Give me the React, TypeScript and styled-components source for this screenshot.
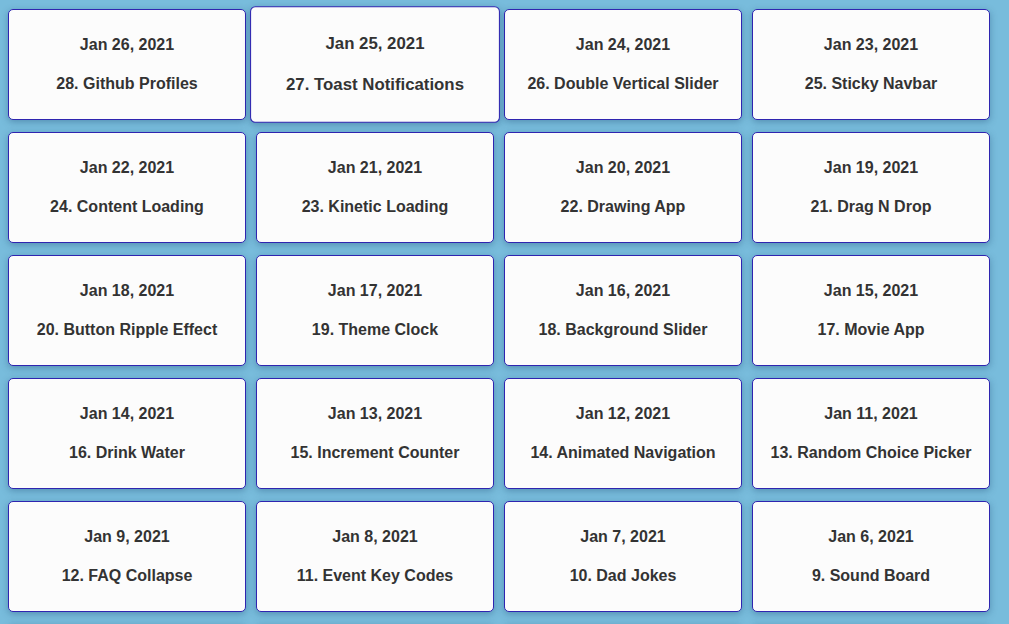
import React from "react";
import styled, { createGlobalStyle } from "styled-components";

const Global = createGlobalStyle`
  html, body {
    margin: 0;
    padding: 0;
    background: #78bcdc;
    font-family: "Liberation Sans", Arial, sans-serif;
  }
`;

const Grid = styled.div`
  display: grid;
  grid-template-columns: repeat(4, 238px);
  column-gap: 10px;
  row-gap: 12px;
  padding: 9px 8px 8px;
`;

const Card = styled.a<{ $active?: boolean }>`
  box-sizing: border-box;
  height: 111px;
  display: flex;
  flex-direction: column;
  align-items: center;
  justify-content: center;
  gap: 21px;
  background: #fcfcfc;
  border: 1px solid #2f25b0;
  border-radius: 5px;
  box-shadow: 0 2px 7px rgba(20, 60, 100, 0.35);
  color: #333;
  text-decoration: none;
  transform: ${(p) => (p.$active ? "scale(1.05)" : "none")};
`;

const DateText = styled.div`
  font-size: 16px;
  line-height: 18px;
  font-weight: bold;
`;

const Title = styled.div`
  font-size: 16px;
  line-height: 18px;
  font-weight: bold;
`;

const items: [string, string][] = [
  ["Jan 26, 2021", "28. Github Profiles"],
  ["Jan 25, 2021", "27. Toast Notifications"],
  ["Jan 24, 2021", "26. Double Vertical Slider"],
  ["Jan 23, 2021", "25. Sticky Navbar"],
  ["Jan 22, 2021", "24. Content Loading"],
  ["Jan 21, 2021", "23. Kinetic Loading"],
  ["Jan 20, 2021", "22. Drawing App"],
  ["Jan 19, 2021", "21. Drag N Drop"],
  ["Jan 18, 2021", "20. Button Ripple Effect"],
  ["Jan 17, 2021", "19. Theme Clock"],
  ["Jan 16, 2021", "18. Background Slider"],
  ["Jan 15, 2021", "17. Movie App"],
  ["Jan 14, 2021", "16. Drink Water"],
  ["Jan 13, 2021", "15. Increment Counter"],
  ["Jan 12, 2021", "14. Animated Navigation"],
  ["Jan 11, 2021", "13. Random Choice Picker"],
  ["Jan 9, 2021", "12. FAQ Collapse"],
  ["Jan 8, 2021", "11. Event Key Codes"],
  ["Jan 7, 2021", "10. Dad Jokes"],
  ["Jan 6, 2021", "9. Sound Board"],
  ["Jan 5, 2021", "8. Form Wave"],
  ["Jan 4, 2021", "7. Split Landing Page"],
  ["Jan 3, 2021", "6. Scroll Animation"],
  ["Jan 2, 2021", "5. Blurry Loading"],
  ["Jan 1, 2021", "4. Hidden Search"],
  ["Dec 31, 2020", "3. Rotating Navigation"],
  ["Dec 30, 2020", "2. Progress Steps"],
  ["Dec 29, 2020", "1. Expanding Cards"],
];

export default function App() {
  return (
    <>
      <Global />
      <Grid>
        {items.map(([d, t], i) => (
          <Card key={t} $active={i === 1}>
            <DateText>{d}</DateText>
            <Title>{t}</Title>
          </Card>
        ))}
      </Grid>
    </>
  );
}
